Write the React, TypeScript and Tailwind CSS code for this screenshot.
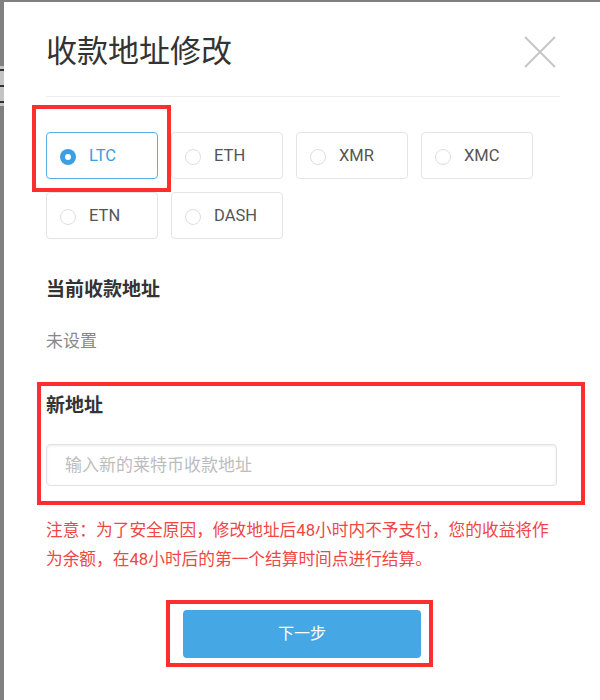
const coins = ["LTC", "ETH", "XMR", "XMC", "ETN", "DASH"];

function RedMark({ className }: { className: string }) {
  return <div className={`pointer-events-none absolute border-4 border-[#ff2e2e] ${className}`} />;
}

function CoinOption({ name, selected }: { name: string; selected: boolean }) {
  return (
    <div
      className={`flex h-[47px] items-center gap-[13px] rounded-[4px] border pl-[13px] pt-[2px] text-[16.5px] ${
        selected ? "border-[#5aaee6] text-[#3a9de0]" : "border-[#e4e4e4] text-[#555]"
      }`}
    >
      {selected ? (
        <span className="flex h-4 w-4 items-center justify-center rounded-full bg-[#3d9fe3]">
          <span className="h-[6px] w-[6px] rounded-full bg-white" />
        </span>
      ) : (
        <span className="h-4 w-4 rounded-full border border-[#dedede]" />
      )}
      <span>{name}</span>
    </div>
  );
}

export default function App() {
  const selected = "LTC";

  return (
    <div className="flex h-[700px] w-[600px] bg-[#808080] pt-[2px] font-['Roboto','Noto_Sans_CJK_SC',sans-serif]">
      {/* sliver of the page behind the dialog */}
      <div className="w-[4px]">
        <div className="mt-[64px] flex h-[40px] flex-col justify-between bg-[#c4c4c4] py-[3px]">
          <div className="h-[2px] bg-[#333]" />
          <div className="h-[2px] bg-[#333]" />
          <div className="h-[2px] bg-[#333]" />
        </div>
      </div>

      <div className="flex-1 bg-white pl-[42px] pr-[40px]">
        {/* header */}
        <div className="flex items-center justify-between border-b border-[#eeeeee] pt-[32px] pb-[26px]">
          <h1 className="text-[31px] leading-[36px] text-[#333]">收款地址修改</h1>
          <svg width="32" height="32" viewBox="0 0 32 32" className="mr-[4px]">
            <path d="M1 1 L31 31 M31 1 L1 31" stroke="#c6c6c6" strokeWidth="2" fill="none" />
          </svg>
        </div>

        {/* coin choices */}
        <div className="mt-[35px] grid w-[487px] grid-cols-4 gap-[13px]">
          {coins.map((c) => (
            <div key={c} className="relative">
              <CoinOption name={c} selected={c === selected} />
              {c === selected && <RedMark className="-top-[27px] -bottom-[13px] -left-[14px] -right-[13px]" />}
            </div>
          ))}
        </div>

        <h2 className="mt-[37px] text-[19px] font-bold leading-[28px] text-[#333]">当前收款地址</h2>
        <p className="mt-[25px] text-[17px] leading-[24px] text-[#888]">未设置</p>

        <div className="relative mt-[39px]">
          <h2 className="text-[19px] font-bold leading-[28px] text-[#333]">新地址</h2>
          <input
            className="mt-[24px] block h-[42px] w-[511px] rounded-[4px] border border-[#e2e2e2] px-[18px] text-[17px] shadow-[inset_0_1px_3px_rgba(0,0,0,0.08)] outline-none placeholder:text-[#bdbdbd]"
            placeholder="输入新的莱特币收款地址"
          />
          <RedMark className="-top-[10px] -bottom-[19px] -left-[9px] -right-[25px]" />
        </div>

        <p className="mt-[30px] text-[16.7px] leading-[29px] text-[#ef4646]">
          注意：为了安全原因，修改地址后48小时内不予支付，您的收益将作为余额，在48小时后的第一个结算时间点进行结算。
        </p>

        <div className="mt-[36px] flex justify-center pr-[2px]">
          <div className="relative">
            <button className="h-[48px] w-[238px] rounded-[4px] bg-[#45a8e4] text-[16px] text-white">下一步</button>
            <RedMark className="-top-[10px] -bottom-[9px] -left-[17px] -right-[12px]" />
          </div>
        </div>
      </div>
    </div>
  );
}
